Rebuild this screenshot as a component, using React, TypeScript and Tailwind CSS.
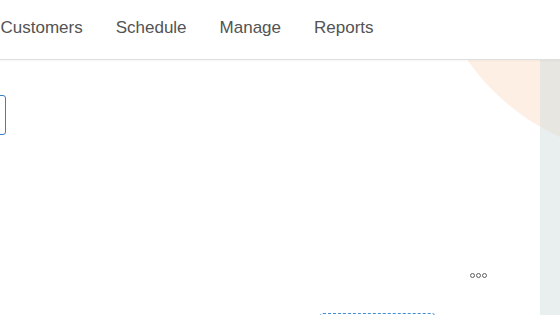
import React from "react";

const navItems = ["Customers", "Schedule", "Manage", "Reports"];

function App() {
  return (
    <div
      className="w-[560px] h-[315px] overflow-hidden bg-white flex flex-col"
      style={{ fontFamily: '"Liberation Sans", Arial, sans-serif' }}
    >
      {/* top nav */}
      <div className="h-[60px] shrink-0 border-b border-[#dcdfe0] shadow-[0_1px_2px_rgba(0,0,0,0.04)] bg-white relative z-20 flex items-center">
        <div className="flex items-center -ml-[16px] pb-[5px]">
          {navItems.map((item) => (
            <span key={item} className="px-[16.5px] text-[17px] text-[#535353] leading-none">
              {item}
            </span>
          ))}
        </div>
      </div>

      {/* main */}
      <div className="flex-1 flex relative overflow-hidden">
        {/* peach deco circle */}
        <div className="absolute left-[427px] top-[-355px] w-[452px] h-[452px] rounded-full bg-[#fdefe4]" />

        <div className="flex-1 relative z-10 flex flex-col">
          <div className="mt-[35px] -ml-[114px] w-[120px] h-[40px] shrink-0 rounded-[3px] border border-[#3d80c2]" />

          <div className="mt-[138px] flex justify-end pr-[53px]">
            <div className="flex gap-[1px]">
              <span className="w-[5px] h-[5px] rounded-full border border-[#5f5f5f]" />
              <span className="w-[5px] h-[5px] rounded-full border border-[#5f5f5f]" />
              <span className="w-[5px] h-[5px] rounded-full border border-[#5f5f5f]" />
            </div>
          </div>

          <div className="mt-[35px] ml-[320px] w-[115px] h-[40px] shrink-0 rounded-[3px] border border-dashed border-[#3f8fd2]" />
        </div>

        {/* right side panel */}
        <div className="w-[20px] shrink-0 relative z-10 bg-[rgba(211,221,221,0.5)]" />
      </div>
    </div>
  );
}

export default App;
